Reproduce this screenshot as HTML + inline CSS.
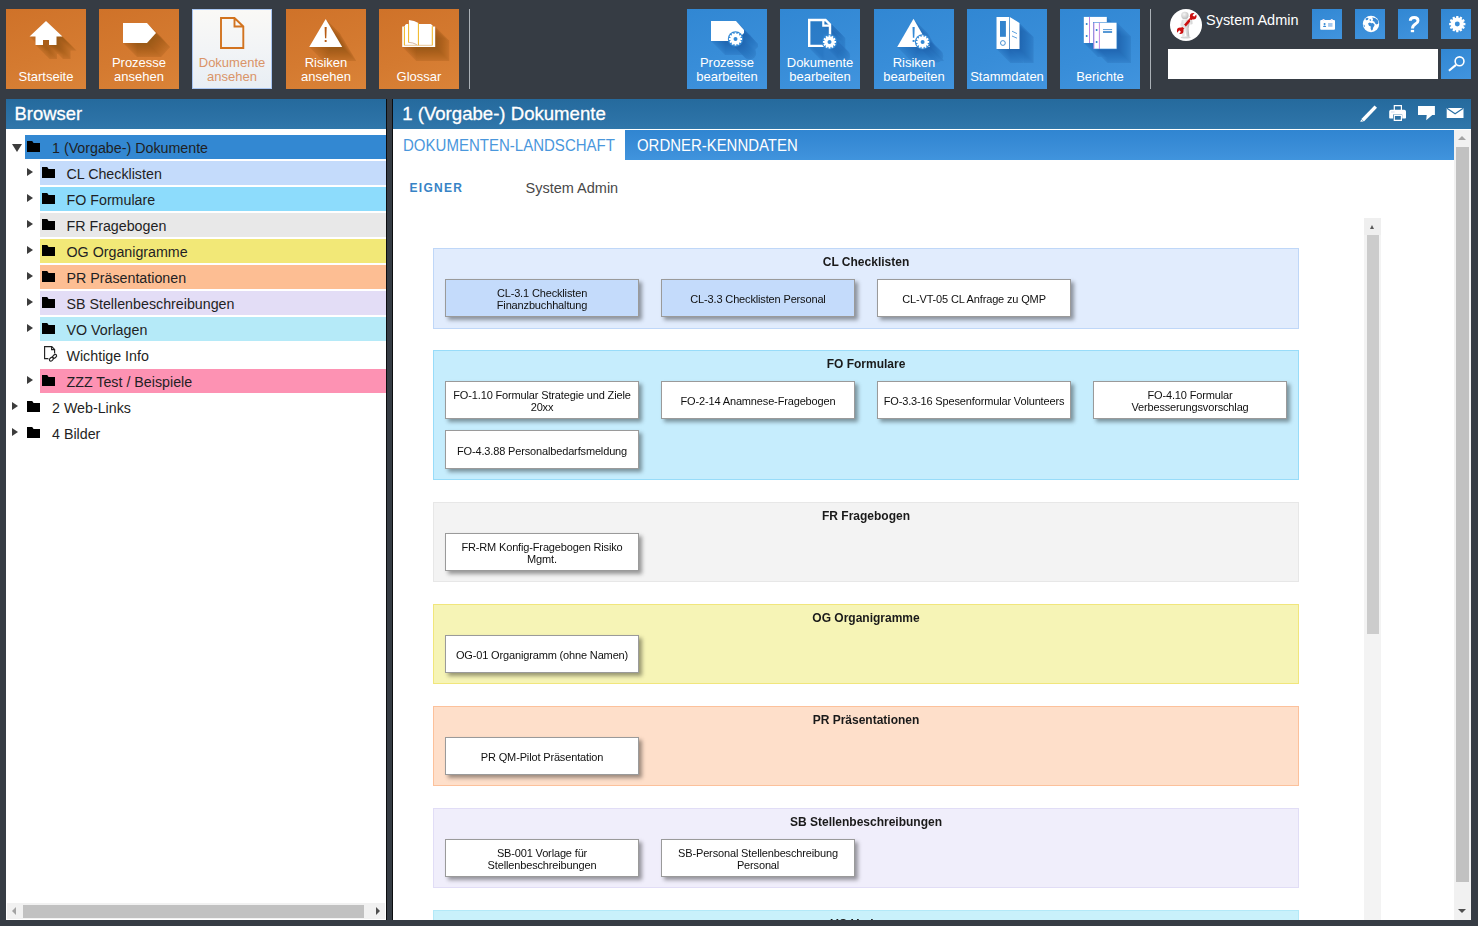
<!DOCTYPE html>
<html lang="de">
<head>
<meta charset="utf-8">
<title>1 (Vorgabe-) Dokumente</title>
<style>
*{box-sizing:border-box;margin:0;padding:0}
html,body{width:1478px;height:926px;overflow:hidden}
body{background:#363c44;font-family:"Liberation Sans",sans-serif;position:relative;color:#222}
.abs{position:absolute}
/* top buttons */
.tb{position:absolute;top:9px;width:80px;height:80px;overflow:hidden}
.tb svg{position:absolute;left:0;top:0;width:80px;height:80px}
.tb .lbl{position:absolute;left:-10px;right:-10px;bottom:5px;text-align:center;font-size:13px;line-height:14px;color:#fff;white-space:nowrap}
.or{background:linear-gradient(160deg,#cf7229 0%,#d47a30 55%,#da8338 100%)}
.bl{background:linear-gradient(160deg,#3187d3 0%,#388dd8 55%,#4194de 100%)}
.sel{background:linear-gradient(180deg,#faf9f6 0%,#f2f4f6 50%,#e8eef4 100%);border:1px solid #a9c6f2}
.sel .lbl{color:#da9468;bottom:4px}
.sep{position:absolute;top:9px;width:1px;height:80px;background:#aab0b6}
.sb{position:absolute;width:30px;height:30px;background:linear-gradient(160deg,#3187d3 0%,#4194de 100%)}
.sb svg{position:absolute;left:0;top:0;width:30px;height:30px}
/* panels */
.hdr{position:absolute;top:99px;height:30px;background:linear-gradient(180deg,#256a9d 0%,#2b71a5 60%,#3077aa 100%);color:#fff;font-size:18.4px;line-height:30px;white-space:nowrap}
.hdr span{position:absolute;top:0;-webkit-text-stroke:.3px #fff}
/* tree */
.row{position:absolute;height:24px;right:0}
.tx{position:absolute;top:1px;font-size:14.25px;line-height:24px;color:#1f1f24;white-space:nowrap}
.fo{position:absolute;width:13px;height:11px}
.ar{position:absolute;width:0;height:0;border-style:solid}
.ar.r{border-width:4px 0 4px 6px;border-color:transparent transparent transparent #3c3c3c}
.ar.d{border-width:8px 5px 0 5px;border-color:#3c3c3c transparent transparent transparent}
/* groups */
.grp{position:absolute;left:433px;width:866px;border:1px solid}
.grp .t{position:absolute;left:0;right:0;top:6px;text-align:center;font-weight:700;font-size:12px;line-height:14px;color:#1a1a1a}
.doc{position:absolute;width:194px;height:38px;border:1px solid #9a9a9a;background:#fff;box-shadow:3px 2.5px 4px rgba(0,0,0,.38);padding-top:2px;font-size:11px;line-height:12px;letter-spacing:-0.15px;color:#101010;text-align:center;display:flex;align-items:center;justify-content:center;white-space:nowrap}
.c1{left:11px}.c2{left:227px}.c3{left:443px}.c4{left:659px}
.r1{top:30px}.r2{top:79px;height:39px}
</style>
</head>
<body>

<!-- ===== TOP BAR ===== -->
<div id="topbar">

<svg width="0" height="0" style="position:absolute">
<defs>
<linearGradient id="shO" gradientUnits="userSpaceOnUse" x1="28" y1="20" x2="64" y2="56"><stop offset="0" stop-color="#8a4208" stop-opacity=".58"/><stop offset=".5" stop-color="#8a4208" stop-opacity=".3"/><stop offset="1" stop-color="#8a4208" stop-opacity=".05"/></linearGradient>
<linearGradient id="shB" gradientUnits="userSpaceOnUse" x1="28" y1="20" x2="66" y2="58"><stop offset="0" stop-color="#0f4f8f" stop-opacity=".54"/><stop offset=".5" stop-color="#0f4f8f" stop-opacity=".3"/><stop offset="1" stop-color="#0f4f8f" stop-opacity=".05"/></linearGradient>
<radialGradient id="hd" cx=".4" cy=".35" r=".75"><stop offset="0" stop-color="#f6f6f6"/><stop offset="1" stop-color="#b4b4b4"/></radialGradient>
<linearGradient id="bd" x1="0" x2="1" y1="0" y2="0"><stop offset="0" stop-color="#d8d8d8"/><stop offset=".45" stop-color="#f2f2f2"/><stop offset="1" stop-color="#b0b0b0"/></linearGradient>
<path id="gear" fill-rule="evenodd" d="M5.10,-1.01 L6.54,-0.88 L6.54,0.88 L5.10,1.01 L4.92,1.67 L6.10,2.51 L5.23,4.03 L3.91,3.43 L3.43,3.91 L4.03,5.23 L2.51,6.10 L1.67,4.92 L1.01,5.10 L0.88,6.54 L-0.88,6.54 L-1.01,5.10 L-1.67,4.92 L-2.51,6.10 L-4.03,5.23 L-3.43,3.91 L-3.91,3.43 L-5.23,4.03 L-6.10,2.51 L-4.92,1.67 L-5.10,1.01 L-6.54,0.88 L-6.54,-0.88 L-5.10,-1.01 L-4.92,-1.67 L-6.10,-2.51 L-5.23,-4.03 L-3.91,-3.43 L-3.43,-3.91 L-4.03,-5.23 L-2.51,-6.10 L-1.67,-4.92 L-1.01,-5.10 L-0.88,-6.54 L0.88,-6.54 L1.01,-5.10 L1.67,-4.92 L2.51,-6.10 L4.03,-5.23 L3.43,-3.91 L3.91,-3.43 L5.23,-4.03 L6.10,-2.51 L4.92,-1.67Z M-2.00,0.00 a2.00,2.00 0 1,0 4.00,0 a2.00,2.00 0 1,0 -4.00,0Z"/>
</defs>
</svg>

<!-- Startseite -->
<div class="tb or" style="left:6px">
<svg viewBox="0 0 80 80"><defs><path id="s_home" fill-rule="evenodd" d="M40,12 L56.50,27.50 L50.50,27.50 L50.50,36 L43,36 L43,31 L37,31 L37,36 L29.50,36 L29.50,27.50 L23.50,27.50Z"/></defs><path d="M23.50,27.50 L29.50,33.50 L29.50,36 L43.50,50 L51,50 L51,45 L52,45 L57,50 L64.50,50 L64.50,41.50 L70.50,41.50 L56.50,27.50 L40,12Z" fill="#6b3000" fill-opacity="0.12"/><g fill="#6b3000" fill-opacity="0.03"><use href="#s_home" x="1" y="1"/><use href="#s_home" x="2" y="2"/><use href="#s_home" x="3" y="3"/><use href="#s_home" x="4" y="4"/><use href="#s_home" x="5" y="5"/><use href="#s_home" x="6" y="6"/><use href="#s_home" x="7" y="7"/><use href="#s_home" x="8" y="8"/><use href="#s_home" x="9" y="9"/><use href="#s_home" x="10" y="10"/><use href="#s_home" x="11" y="11"/><use href="#s_home" x="12" y="12"/><use href="#s_home" x="13" y="13"/><use href="#s_home" x="14" y="14"/></g>
<path fill="#fff" d="M40,12 L56.5,27.5 L50.5,27.5 L50.5,36 L43,36 L43,31 L37,31 L37,36 L29.5,36 L29.5,27.5 L23.5,27.5 Z"/></svg>
<div class="lbl">Startseite</div></div>

<!-- Prozesse ansehen -->
<div class="tb or" style="left:99px">
<svg viewBox="0 0 80 80"><defs><path id="s_tag" fill-rule="evenodd" d="M24,14 L48,14 L57,24 L48,34 L24,34Z"/></defs><path d="M62,28 L48,14 L24,14 L24,34 L38,48 L62,48 L71,38Z" fill="#6b3000" fill-opacity="0.12"/><g fill="#6b3000" fill-opacity="0.03"><use href="#s_tag" x="1" y="1"/><use href="#s_tag" x="2" y="2"/><use href="#s_tag" x="3" y="3"/><use href="#s_tag" x="4" y="4"/><use href="#s_tag" x="5" y="5"/><use href="#s_tag" x="6" y="6"/><use href="#s_tag" x="7" y="7"/><use href="#s_tag" x="8" y="8"/><use href="#s_tag" x="9" y="9"/><use href="#s_tag" x="10" y="10"/><use href="#s_tag" x="11" y="11"/><use href="#s_tag" x="12" y="12"/><use href="#s_tag" x="13" y="13"/><use href="#s_tag" x="14" y="14"/></g>
<polygon fill="#fff" points="24,14 48,14 57,24 48,34 24,34"/></svg>
<div class="lbl">Prozesse<br>ansehen</div></div>

<!-- Dokumente ansehen (selected) -->
<div class="tb sel" style="left:192px">
<svg viewBox="0 0 80 80" style="left:-1px;top:-1px"><path fill="none" stroke="#d2731f" stroke-width="1.9" d="M29,9 L42.5,9 L51.3,17.5 L51.3,39 L29,39 Z M42.5,9 L42.5,17.5 L51.3,17.5"/></svg>
<div class="lbl" style="left:-11px;right:-11px">Dokumente<br>ansehen</div></div>

<!-- Risiken ansehen -->
<div class="tb or" style="left:286px">
<svg viewBox="0 0 80 80"><defs><path id="s_tri" fill-rule="evenodd" d="M39.70,10 L56.20,38 L23.20,38Z"/></defs><path d="M39.70,10 L23.20,38 L37.20,52 L70.20,52 L53.70,24Z" fill="#6b3000" fill-opacity="0.12"/><g fill="#6b3000" fill-opacity="0.03"><use href="#s_tri" x="1" y="1"/><use href="#s_tri" x="2" y="2"/><use href="#s_tri" x="3" y="3"/><use href="#s_tri" x="4" y="4"/><use href="#s_tri" x="5" y="5"/><use href="#s_tri" x="6" y="6"/><use href="#s_tri" x="7" y="7"/><use href="#s_tri" x="8" y="8"/><use href="#s_tri" x="9" y="9"/><use href="#s_tri" x="10" y="10"/><use href="#s_tri" x="11" y="11"/><use href="#s_tri" x="12" y="12"/><use href="#s_tri" x="13" y="13"/><use href="#s_tri" x="14" y="14"/></g>
<polygon fill="#fff" points="39.7,10 56.2,38 23.2,38"/>
<path d="M38.6,18 L40.7,18 L40.3,29.3 L39,29.3Z" fill="#b85c14"/><rect x="38.7" y="31" width="1.9" height="2" fill="#b85c14"/></svg>
<div class="lbl">Risiken<br>ansehen</div></div>

<!-- Glossar -->
<div class="tb or" style="left:379px">
<svg viewBox="0 0 80 80"><defs><path id="s_book" fill-rule="evenodd" d="M23.20,17.50 L25.90,17.50 L25.90,14.90 L29.90,14.90 L29.90,10.90 L35,11.60 L39.50,14 L39.80,14.90 L52.50,14.90 L54,17.50 L56.20,17.50 L56.20,38.10 L23.20,38.10Z"/></defs><path d="M35,11.60 L29.90,10.90 L29.90,14.90 L25.90,14.90 L25.90,17.50 L23.20,17.50 L23.20,38.10 L37.20,52.10 L70.20,52.10 L70.20,31.50 L56.20,17.50 L55.10,17.50 L52.50,14.90 L40.40,14.90 L39.50,14Z" fill="#6b3000" fill-opacity="0.12"/><g fill="#6b3000" fill-opacity="0.03"><use href="#s_book" x="1" y="1"/><use href="#s_book" x="2" y="2"/><use href="#s_book" x="3" y="3"/><use href="#s_book" x="4" y="4"/><use href="#s_book" x="5" y="5"/><use href="#s_book" x="6" y="6"/><use href="#s_book" x="7" y="7"/><use href="#s_book" x="8" y="8"/><use href="#s_book" x="9" y="9"/><use href="#s_book" x="10" y="10"/><use href="#s_book" x="11" y="11"/><use href="#s_book" x="12" y="12"/><use href="#s_book" x="13" y="13"/><use href="#s_book" x="14" y="14"/></g>
<path fill="#fff" d="M23.2,17.5 L25.9,17.5 L25.9,16.4 Q26.2,14.9 27.6,14.9 L29.9,14.9 L29.9,10.9 Q35.5,11.4 39.5,14 L39.8,14.9 L51.6,14.9 Q53.6,15.4 54,17.5 L56.2,17.5 L56.2,38.1 L23.2,38.1 Z"/>
<path fill="none" stroke="#efb010" stroke-width=".95" d="M25.4,17.9 L25.4,36.3 M53.3,17.2 L53.3,36.3 M29.6,15 L29.6,33.6 M39.4,14 L39.4,36.3"/>
<path fill="none" stroke="#d9a050" stroke-width=".6" d="M25.4,36.3 L53.3,36.3"/>
<path fill="none" stroke="#b98a66" stroke-width=".6" d="M29.8,33.4 Q33.5,33.4 37.8,35.6"/></svg>
<div class="lbl">Glossar</div></div>

<div class="sep" style="left:469px"></div>

<!-- Prozesse bearbeiten -->
<div class="tb bl" style="left:687px">
<svg viewBox="0 0 80 80"><defs><path id="s_tagg" fill-rule="evenodd" d="M57,24 L57,21 L49,12 L24,12 L24,32 L42.21,32 L42.68,33.11 L43.40,34.19 L44.31,35.10 L45.39,35.82 L46.58,36.32 L47.85,36.57 L49.15,36.57 L49.79,36.47 L50.42,36.32 L51.61,35.82 L52.69,35.10 L53.60,34.19 L54.32,33.11 L54.82,31.92 L55.07,30.65 L55.10,30 L55.07,29.35 L54.82,28.08 L54.24,26.76Z"/></defs><path d="M55.17,46 L58.31,49.10 L59.39,49.82 L60.58,50.32 L61.85,50.57 L63.15,50.57 L64.42,50.32 L65.61,49.82 L66.69,49.10 L67.60,48.19 L68.32,47.11 L68.82,45.92 L68.97,45.29 L69.10,44 L68.97,42.71 L68.60,41.47 L68.24,40.76 L71,38 L71,35 L63,26 L49,12 L24,12 L24,32 L38,46Z" fill="#0b3f78" fill-opacity="0.1"/><g fill="#0b3f78" fill-opacity="0.025"><use href="#s_tagg" x="1" y="1"/><use href="#s_tagg" x="2" y="2"/><use href="#s_tagg" x="3" y="3"/><use href="#s_tagg" x="4" y="4"/><use href="#s_tagg" x="5" y="5"/><use href="#s_tagg" x="6" y="6"/><use href="#s_tagg" x="7" y="7"/><use href="#s_tagg" x="8" y="8"/><use href="#s_tagg" x="9" y="9"/><use href="#s_tagg" x="10" y="10"/><use href="#s_tagg" x="11" y="11"/><use href="#s_tagg" x="12" y="12"/><use href="#s_tagg" x="13" y="13"/><use href="#s_tagg" x="14" y="14"/></g>
<polygon fill="#fff" points="24,12 49,12 57,21 57,24 49,32 24,32"/>
<circle cx="48.5" cy="30" r="7.7" fill="#3489d5"/><use href="#gear" x="48.5" y="30" fill="#fff"/></svg>
<div class="lbl">Prozesse<br>bearbeiten</div></div>

<!-- Dokumente bearbeiten -->
<div class="tb bl" style="left:780px">
<svg viewBox="0 0 80 80"><defs><path id="s_docg" fill-rule="evenodd" d="M45.45,38.10 L46.39,38.72 L46.97,39 L47.58,39.22 L48.85,39.47 L50.15,39.47 L50.79,39.37 L52.03,39 L53.17,38.39 L53.69,38 L54.60,37.09 L55.32,36.01 L55.82,34.82 L55.97,34.19 L56.10,32.90 L55.97,31.61 L55.60,30.37 L54.99,29.23 L54.17,28.23 L53.17,27.41 L52.03,26.80 L51.20,26.53 L51.20,15 L46,9.80 L28,9.80 L28,38.10Z M48.80,26.34 L47.58,26.58 L46.97,26.80 L45.83,27.41 L45.31,27.80 L44.40,28.71 L43.68,29.79 L43.18,30.98 L42.93,32.25 L42.90,32.90 L43.03,34.19 L43.53,35.70 L30.40,35.70 L30.40,12.20 L42.20,12.20 L42.20,17.80 L48.80,17.80Z M44.40,12.20 L45,12.20 L48.40,15.60 L44.40,15.60Z"/></defs><path d="M28,9.80 L28,38.10 L42,52.10 L59.45,52.10 L60.39,52.72 L61.58,53.22 L62.85,53.47 L63.50,53.50 L64.79,53.37 L66.03,53 L67.17,52.39 L68.17,51.57 L68.99,50.57 L69.32,50.01 L69.82,48.82 L70.07,47.55 L70.07,46.25 L69.82,44.98 L69.32,43.79 L68.99,43.23 L68.17,42.23 L65.20,39.27 L65.20,29 L46,9.80Z M47.58,26.58 L46.97,26.80 L45.83,27.41 L45.31,27.80 L44.40,28.71 L44.40,26.20 L48.80,26.20 L48.80,26.34Z" fill="#0b3f78" fill-opacity="0.1"/><g fill="#0b3f78" fill-opacity="0.025"><use href="#s_docg" x="1" y="1"/><use href="#s_docg" x="2" y="2"/><use href="#s_docg" x="3" y="3"/><use href="#s_docg" x="4" y="4"/><use href="#s_docg" x="5" y="5"/><use href="#s_docg" x="6" y="6"/><use href="#s_docg" x="7" y="7"/><use href="#s_docg" x="8" y="8"/><use href="#s_docg" x="9" y="9"/><use href="#s_docg" x="10" y="10"/><use href="#s_docg" x="11" y="11"/><use href="#s_docg" x="12" y="12"/><use href="#s_docg" x="13" y="13"/><use href="#s_docg" x="14" y="14"/></g>
<path fill="none" stroke="#fff" stroke-width="2.4" d="M29.2,11 L45.5,11 L50,15.5 L50,36.9 L29.2,36.9 Z"/><path fill="none" stroke="#fff" stroke-width="2.2" d="M43.3,11 L43.3,16.7 L50,16.7"/>
<circle cx="49.5" cy="32.9" r="7.7" fill="#3489d5"/><use href="#gear" x="49.5" y="32.9" fill="#fff"/></svg>
<div class="lbl">Dokumente<br>bearbeiten</div></div>

<!-- Risiken bearbeiten -->
<div class="tb bl" style="left:874px">
<svg viewBox="0 0 80 80"><defs><path id="s_trig" fill-rule="evenodd" d="M39.50,9.80 L23.20,38.10 L44.55,38.10 L45.49,38.72 L46.68,39.22 L47.95,39.47 L48.60,39.50 L49.89,39.37 L50.52,39.22 L51.71,38.72 L52.65,38.10 L55.80,38.10 L54.50,35.84 L54.92,34.82 L55.07,34.19 L55.20,32.90 L55.07,31.61 L54.92,30.98 L54.42,29.79 L53.70,28.71 L52.79,27.80 L52.27,27.41 L51.13,26.80 L50.52,26.58 L49.02,26.32Z"/></defs><path d="M37.20,52.10 L58.55,52.10 L59.49,52.72 L60.68,53.22 L61.95,53.47 L62.60,53.50 L63.89,53.37 L64.52,53.22 L65.71,52.72 L66.65,52.10 L69.80,52.10 L68.50,49.84 L68.92,48.82 L69.07,48.19 L69.17,47.55 L69.17,46.25 L68.92,44.98 L68.42,43.79 L68.09,43.23 L67.27,42.23 L59.84,34.80 L53.50,23.80 L39.50,9.80 L23.20,38.10Z" fill="#0b3f78" fill-opacity="0.1"/><g fill="#0b3f78" fill-opacity="0.025"><use href="#s_trig" x="1" y="1"/><use href="#s_trig" x="2" y="2"/><use href="#s_trig" x="3" y="3"/><use href="#s_trig" x="4" y="4"/><use href="#s_trig" x="5" y="5"/><use href="#s_trig" x="6" y="6"/><use href="#s_trig" x="7" y="7"/><use href="#s_trig" x="8" y="8"/><use href="#s_trig" x="9" y="9"/><use href="#s_trig" x="10" y="10"/><use href="#s_trig" x="11" y="11"/><use href="#s_trig" x="12" y="12"/><use href="#s_trig" x="13" y="13"/><use href="#s_trig" x="14" y="14"/></g>
<polygon fill="#fff" points="39.5,9.8 55.8,38.1 23.2,38.1"/>
<path d="M38.5,18.1 L40.7,18.1 L40.3,28.8 L38.9,28.8Z" fill="#3489d5"/><rect x="38.6" y="31" width="2" height="1.9" fill="#3489d5"/>
<circle cx="48.6" cy="32.9" r="7.7" fill="#3489d5"/><use href="#gear" x="48.6" y="32.9" fill="#fff"/></svg>
<div class="lbl">Risiken<br>bearbeiten</div></div>

<!-- Stammdaten -->
<div class="tb bl" style="left:967px">
<svg viewBox="0 0 80 80"><defs><path id="s_binder" fill-rule="evenodd" d="M29.50,40 L42.10,40 L42.10,7.90 L29.50,7.90Z M42.80,40 L52.50,40 L52.50,13.90 L42.80,7.90Z"/></defs><path d="M43.50,54 L56.10,54 L56.10,53.30 L56.80,54 L66.50,54 L66.50,27.90 L52.50,13.90 L42.80,7.90 L42.80,8.60 L42.10,7.90 L29.50,7.90 L29.50,40Z" fill="#0b3f78" fill-opacity="0.1"/><g fill="#0b3f78" fill-opacity="0.025"><use href="#s_binder" x="1" y="1"/><use href="#s_binder" x="2" y="2"/><use href="#s_binder" x="3" y="3"/><use href="#s_binder" x="4" y="4"/><use href="#s_binder" x="5" y="5"/><use href="#s_binder" x="6" y="6"/><use href="#s_binder" x="7" y="7"/><use href="#s_binder" x="8" y="8"/><use href="#s_binder" x="9" y="9"/><use href="#s_binder" x="10" y="10"/><use href="#s_binder" x="11" y="11"/><use href="#s_binder" x="12" y="12"/><use href="#s_binder" x="13" y="13"/><use href="#s_binder" x="14" y="14"/></g>
<path fill="#fff" d="M29.5,7.9 L42.1,7.9 L42.1,40 L29.5,40 Z M42.8,7.9 L52.5,13.9 L52.5,40 L42.8,40 Z"/>
<rect x="33" y="12" width="5.9" height="15.8" fill="#3383cd"/><circle cx="35.9" cy="34" r="2.4" fill="none" stroke="#3383cd" stroke-width=".9"/>
<path d="M45,22.2 L50,24.6 M45,27 L50,29.2" stroke="#3489d5" stroke-width=".8"/></svg>
<div class="lbl">Stammdaten</div></div>

<!-- Berichte -->
<div class="tb bl" style="left:1060px">
<svg viewBox="0 0 80 80"><defs><path id="s_ber" fill-rule="evenodd" d="M46.80,7.90 L23.80,7.90 L23.80,34 L33.40,34 L33.40,40 L56.90,40 L56.90,13.30 L46.80,13.30Z"/></defs><path d="M56.90,13.30 L52.20,13.30 L46.80,7.90 L23.80,7.90 L23.80,34 L37.80,48 L41.40,48 L47.40,54 L70.90,54 L70.90,27.30Z" fill="#0b3f78" fill-opacity="0.1"/><g fill="#0b3f78" fill-opacity="0.025"><use href="#s_ber" x="1" y="1"/><use href="#s_ber" x="2" y="2"/><use href="#s_ber" x="3" y="3"/><use href="#s_ber" x="4" y="4"/><use href="#s_ber" x="5" y="5"/><use href="#s_ber" x="6" y="6"/><use href="#s_ber" x="7" y="7"/><use href="#s_ber" x="8" y="8"/><use href="#s_ber" x="9" y="9"/><use href="#s_ber" x="10" y="10"/><use href="#s_ber" x="11" y="11"/><use href="#s_ber" x="12" y="12"/><use href="#s_ber" x="13" y="13"/><use href="#s_ber" x="14" y="14"/></g>
<rect x="23.8" y="7.9" width="23" height="26.1" fill="#fff"/><rect x="33.4" y="13.3" width="23.5" height="26.7" fill="#fff" stroke="#3489d5" stroke-width=".6"/>
<path d="M29.5,7.9 L29.5,34 M39.4,13.6 L39.4,40 M33.9,13.8 L33.9,40" stroke="#b268dc" stroke-width=".8"/>
<circle cx="26.7" cy="15" r="1" fill="#2d7fcb"/><circle cx="26.7" cy="26.9" r="1" fill="#2d7fcb"/><circle cx="36.6" cy="20.9" r="1" fill="#2d7fcb"/><circle cx="36.6" cy="33" r="1" fill="#2d7fcb"/>
<path d="M43,20.6 L52.1,20.6" stroke="#2d7fcb" stroke-width=".8"/><path d="M43,23 L52.1,23" stroke="#2d7fcb" stroke-width="1.6"/></svg>
<div class="lbl">Berichte</div></div>

<div class="sep" style="left:1150px"></div>

<!-- avatar -->
<div class="abs" style="left:1170px;top:9px;width:32px;height:32px;border-radius:50%;background:radial-gradient(circle at 50% 42%,#fff 0%,#fff 68%,#ececec 100%);overflow:hidden">
<svg viewBox="0 0 32 32" width="32" height="32" style="position:absolute;left:0;top:0">
<ellipse cx="15.6" cy="28.4" rx="5" ry="1" fill="#d4d4d4"/>
<circle cx="14.9" cy="6.5" r="3.7" fill="url(#hd)"/>
<path d="M11.8,11 Q15,9.7 18.4,10.8 L19.6,14.5 L18.6,19.5 L19.4,27.8 L16.5,27.8 L15.6,21.5 L14.8,27.8 L12.3,27.8 L12.6,19.5 L11,15.5Z" fill="url(#bd)"/>
<path d="M11.4,20.6 L22.2,8.4" stroke="#cc1010" stroke-width="2.6"/>
<circle cx="23.2" cy="7.2" r="3.3" fill="#cc1010"/><rect x="23.4" y="6.1" width="4.2" height="2.2" fill="#fff" transform="rotate(-48 23.2 7.2)"/>
<circle cx="10.2" cy="21.8" r="3.3" fill="#cc1010"/><rect x="10.4" y="20.7" width="4.2" height="2.2" fill="#fff" transform="rotate(128 10.2 21.8)"/>
<path d="M10.3,14.4 L14.6,16 L16,18 L14.3,19.4 L10.6,16.8Z" fill="#e4e4e4"/>
<path d="M19.8,10.6 L22.4,11.4 L22.6,15 L20.5,15.8 Z" fill="#d8d8d8"/>
</svg></div>
<div class="abs" style="left:1206px;top:10px;font-size:15.4px;line-height:20px;color:#fff;white-space:nowrap;transform:scaleX(.94);transform-origin:0 0">System Admin</div>

<!-- small buttons -->
<div class="sb" style="left:1312px;top:9px"><svg viewBox="0 0 30 30"><path fill="#fff" d="M8.2,12 Q8.2,11 9.2,11 L10.6,11 L10.6,10 L12.4,10 L12.4,11 L18.8,11 L18.8,10 L20.6,10 L20.6,11 L22,11 Q23,11 23,12 L23,19.7 Q23,20.7 22,20.7 L9.2,20.7 Q8.2,20.7 8.2,19.7 Z"/>
<rect x="16.1" y="14" width="4.4" height="3.8" fill="#a6c9ee"/><circle cx="12.6" cy="15" r="1.05" fill="#3489d5"/><path d="M11,18 Q11,16.4 12.6,16.4 Q14.2,16.4 14.2,18Z" fill="#3489d5"/><circle cx="11.5" cy="10.9" r=".45" fill="#b070e0"/><circle cx="19.7" cy="10.9" r=".45" fill="#b070e0"/></svg></div>
<div class="sb" style="left:1355px;top:9px"><svg viewBox="0 0 30 30"><circle cx="16" cy="15" r="8.2" fill="#fff"/>
<path fill="#3a8ad5" d="M17.2,8.4 Q20.8,8.2 23,11.4 Q23.6,13.2 23.2,14.8 L21.6,15.6 L20.2,14.4 L19.2,12.6 L17.6,12 L18,10.2Z M13,14.4 L14.8,13.6 L16.4,14.2 L17.8,14 L19.4,15.2 L19.4,16.8 L18.2,18.6 L17.6,21 L16.4,21.4 L15.6,19.4 L15.8,17.6 L14,16.8Z M10.4,9.6 L12.4,8.8 L13.6,9.6 L12.6,11 L11,11.2Z M8.6,15.4 L9.6,16.2 L9.8,18.2 L8.9,17.4Z M14.4,10.6 L15.8,10.2 L16.2,11.4 L15,12Z"/></svg></div>
<div class="sb" style="left:1398px;top:9px"><svg viewBox="0 0 30 30"><path fill="none" stroke="#fff" stroke-width="2.9" d="M12.3,11.8 Q12.3,8.5 16.2,8.5 Q20,8.5 20,11.7 Q20,13.5 17.4,15.1 Q14.5,16.8 14.5,19.4"/><rect x="12.8" y="20.9" width="3.3" height="2.3" fill="#fff"/></svg></div>
<div class="sb" style="left:1441px;top:9px"><svg viewBox="0 0 30 30"><g transform="translate(16.3,15.05) scale(1.24)"><use href="#gear" fill="#fff"/></g></svg></div>

<!-- search -->
<div class="abs" style="left:1168px;top:49px;width:270px;height:30px;background:#fff"></div>
<div class="sb" style="left:1441px;top:49px"><svg viewBox="0 0 30 30"><circle cx="18.55" cy="12.3" r="4.4" fill="none" stroke="#fff" stroke-width="1.6"/><path d="M15,15.9 L7.9,21.8" stroke="#fff" stroke-width="2.1" stroke-linecap="butt"/></svg></div>
</div>

<!-- ===== LEFT PANEL ===== -->
<div id="left">
<div class="hdr" style="left:6px;width:380px"><span style="left:8.6px">Browser</span></div>
<div class="abs" style="left:6px;top:129px;width:380px;height:791px;background:#fff;overflow:hidden">
<div class="row" style="top:6px;left:0"><div class="abs" style="left:19px;right:0;top:0;height:24px;background:#3388d2"></div><div class="ar d" style="left:6px;top:9px"></div><svg class="fo" style="left:21px;top:6px" viewBox="0 0 13 11"><path d="M0,0 L5.2,0 L6.6,2 L13,2 L13,11 L0,11Z" fill="#000"/></svg><div class="tx" style="left:46.0px">1 (Vorgabe-) Dokumente</div></div>
<div class="row" style="top:32px;left:0"><div class="abs" style="left:34px;right:0;top:0;height:24px;background:#c4dbfb"></div><div class="ar r" style="left:21px;top:7px"></div><svg class="fo" style="left:36px;top:6px" viewBox="0 0 13 11"><path d="M0,0 L5.2,0 L6.6,2 L13,2 L13,11 L0,11Z" fill="#000"/></svg><div class="tx" style="left:60.5px">CL Checklisten</div></div>
<div class="row" style="top:58px;left:0"><div class="abs" style="left:34px;right:0;top:0;height:24px;background:#8ddcfc"></div><div class="ar r" style="left:21px;top:7px"></div><svg class="fo" style="left:36px;top:6px" viewBox="0 0 13 11"><path d="M0,0 L5.2,0 L6.6,2 L13,2 L13,11 L0,11Z" fill="#000"/></svg><div class="tx" style="left:60.5px">FO Formulare</div></div>
<div class="row" style="top:84px;left:0"><div class="abs" style="left:34px;right:0;top:0;height:24px;background:#e8e8e8"></div><div class="ar r" style="left:21px;top:7px"></div><svg class="fo" style="left:36px;top:6px" viewBox="0 0 13 11"><path d="M0,0 L5.2,0 L6.6,2 L13,2 L13,11 L0,11Z" fill="#000"/></svg><div class="tx" style="left:60.5px">FR Fragebogen</div></div>
<div class="row" style="top:110px;left:0"><div class="abs" style="left:34px;right:0;top:0;height:24px;background:#f2e877"></div><div class="ar r" style="left:21px;top:7px"></div><svg class="fo" style="left:36px;top:6px" viewBox="0 0 13 11"><path d="M0,0 L5.2,0 L6.6,2 L13,2 L13,11 L0,11Z" fill="#000"/></svg><div class="tx" style="left:60.5px">OG Organigramme</div></div>
<div class="row" style="top:136px;left:0"><div class="abs" style="left:34px;right:0;top:0;height:24px;background:#fdbe93"></div><div class="ar r" style="left:21px;top:7px"></div><svg class="fo" style="left:36px;top:6px" viewBox="0 0 13 11"><path d="M0,0 L5.2,0 L6.6,2 L13,2 L13,11 L0,11Z" fill="#000"/></svg><div class="tx" style="left:60.5px">PR Präsentationen</div></div>
<div class="row" style="top:162px;left:0"><div class="abs" style="left:34px;right:0;top:0;height:24px;background:#e3ddf6"></div><div class="ar r" style="left:21px;top:7px"></div><svg class="fo" style="left:36px;top:6px" viewBox="0 0 13 11"><path d="M0,0 L5.2,0 L6.6,2 L13,2 L13,11 L0,11Z" fill="#000"/></svg><div class="tx" style="left:60.5px">SB Stellenbeschreibungen</div></div>
<div class="row" style="top:188px;left:0"><div class="abs" style="left:34px;right:0;top:0;height:24px;background:#b5eaf8"></div><div class="ar r" style="left:21px;top:7px"></div><svg class="fo" style="left:36px;top:6px" viewBox="0 0 13 11"><path d="M0,0 L5.2,0 L6.6,2 L13,2 L13,11 L0,11Z" fill="#000"/></svg><div class="tx" style="left:60.5px">VO Vorlagen</div></div>
<div class="row" style="top:214px;left:0"><svg class="abs" style="left:38px;top:3px;width:15px;height:17px" viewBox="0 0 15 17"><path d="M10.6,7.6 L10.6,3.4 L7.8,0.6 L0.6,0.6 L0.6,12.6 L4.4,12.6 M7.6,0.6 L7.6,3.6 L10.6,3.6" fill="none" stroke="#222" stroke-width="1.15"/><g fill="none" stroke="#222" stroke-width="1.15"><ellipse cx="10.6" cy="10.4" rx="2.3" ry="1.5" transform="rotate(-40 10.6 10.4)"/><ellipse cx="7.4" cy="13.2" rx="2.3" ry="1.5" transform="rotate(-40 7.4 13.2)"/></g></svg><div class="tx" style="left:60.5px">Wichtige Info</div></div>
<div class="row" style="top:240px;left:0"><div class="abs" style="left:34px;right:0;top:0;height:24px;background:#fd92b3"></div><div class="ar r" style="left:21px;top:7px"></div><svg class="fo" style="left:36px;top:6px" viewBox="0 0 13 11"><path d="M0,0 L5.2,0 L6.6,2 L13,2 L13,11 L0,11Z" fill="#000"/></svg><div class="tx" style="left:60.5px">ZZZ Test / Beispiele</div></div>
<div class="row" style="top:266px;left:0"><div class="ar r" style="left:6px;top:7px"></div><svg class="fo" style="left:21px;top:6px" viewBox="0 0 13 11"><path d="M0,0 L5.2,0 L6.6,2 L13,2 L13,11 L0,11Z" fill="#000"/></svg><div class="tx" style="left:46.0px">2 Web-Links</div></div>
<div class="row" style="top:292px;left:0"><div class="ar r" style="left:6px;top:7px"></div><svg class="fo" style="left:21px;top:6px" viewBox="0 0 13 11"><path d="M0,0 L5.2,0 L6.6,2 L13,2 L13,11 L0,11Z" fill="#000"/></svg><div class="tx" style="left:46.0px">4 Bilder</div></div>
<div class="abs" style="left:1px;top:774px;width:378px;height:16px;background:#f1f1f1"><div class="abs" style="left:16px;top:2px;width:341px;height:13px;background:#c1c1c1"></div><div class="abs" style="left:5px;top:4px;width:0;height:0;border-style:solid;border-width:4px 4px 4px 0;border-color:transparent #a3a3a3 transparent transparent"></div><div class="abs" style="left:369px;top:4px;width:0;height:0;border-style:solid;border-width:4px 0 4px 4px;border-color:transparent transparent transparent #505050"></div></div>
</div>
<div class="abs" style="left:386px;top:99px;width:1px;height:821px;background:#0c0d0f"></div>
<div class="abs" style="left:392px;top:99px;width:1px;height:821px;background:#0c0d0f"></div>
</div>

<!-- ===== RIGHT PANEL ===== -->
<div id="right">
<div class="hdr" style="left:393px;width:1078px"><span style="left:9.2px;font-size:18.6px">1 (Vorgabe-) Dokumente</span>
<svg class="abs" style="left:965px;top:4px;width:22px;height:22px" viewBox="0 0 22 22"><path d="M3.4,16 L16.5,2.4 L19,4.8 L5.9,18.4 Z" fill="#fff"/><path d="M2.2,18.8 L3.3,16.6 L5.4,18.6Z" fill="#fff"/></svg>
<svg class="abs" style="left:994px;top:4px;width:22px;height:22px" viewBox="0 0 22 22"><path d="M7.3,7 L7.3,2.6 L14.4,2.6 L14.4,7" fill="none" stroke="#fff" stroke-width="1.2"/><path d="M2.2,8.6 Q2.2,6.8 4,6.8 L17.2,6.8 Q19,6.8 19,8.6 L19,14.8 Q19,15.6 18.2,15.6 L15.2,15.6 L15.2,11.6 L6,11.6 L6,15.6 L3,15.6 Q2.2,15.6 2.2,14.8Z" fill="#fff"/><path d="M7.3,12.4 L14.4,12.4 L14.4,17.4 L7.3,17.4Z" fill="#2a70a4" stroke="#fff" stroke-width="1.2"/><rect x="4" y="8.6" width="3.6" height=".8" fill="#c9d8ee"/></svg>
<svg class="abs" style="left:1023px;top:4px;width:22px;height:22px" viewBox="0 0 22 22"><path d="M2,3 L18.9,3 L18.9,12 L16.3,12 L10.2,17.3 L10.7,12 L2,12Z" fill="#fff"/></svg>
<svg class="abs" style="left:1052px;top:4px;width:22px;height:22px" viewBox="0 0 22 22"><rect x="1.7" y="5" width="16.8" height="10" fill="#fff"/><path d="M1.9,5.2 L10.1,10.8 L18.3,5.2" fill="none" stroke="#2a70a4" stroke-width="1.1"/></svg>
</div>
<div class="abs" style="left:393px;top:129px;width:1078px;height:791px;background:#fff;overflow:hidden">
<div class="abs" style="left:232px;top:1px;width:829px;height:30px;background:linear-gradient(180deg,#3085d1 0%,#3a8dd7 60%,#4094dd 100%)"></div>
<div class="abs" style="left:9.6px;top:2px;font-size:16.7px;line-height:30px;color:#4a97dc;white-space:nowrap;transform:scaleX(.9);transform-origin:0 0">DOKUMENTEN-LANDSCHAFT</div>
<div class="abs" style="left:244px;top:2px;font-size:16.7px;line-height:30px;color:#fff;white-space:nowrap;transform:scaleX(.895);transform-origin:0 0">ORDNER-KENNDATEN</div>
<div class="abs" style="left:16.5px;top:51px;font-size:12px;font-weight:700;letter-spacing:1.3px;line-height:16px;color:#3783c6;white-space:nowrap">EIGNER</div>
<div class="abs" style="left:132.5px;top:50px;font-size:14.5px;line-height:18px;color:#484848;white-space:nowrap">System Admin</div>
<div class="abs" style="left:1061px;top:1px;width:17px;height:790px;background:#f1f1f1"><div class="abs" style="left:2px;top:17px;width:13px;height:735px;background:#c1c1c1"></div><div class="abs" style="left:4px;top:6px;width:0;height:0;border-style:solid;border-width:0 4.5px 4px 4.5px;border-color:transparent transparent #a3a3a3 transparent"></div><div class="abs" style="left:4px;top:779px;width:0;height:0;border-style:solid;border-width:4px 4.5px 0 4.5px;border-color:#505050 transparent transparent transparent"></div></div>
<div class="abs" style="left:971px;top:89px;width:17px;height:702px;background:#f3f3f3"><div class="abs" style="left:0;top:0;width:17px;height:17px;background:#efefef"></div><div class="abs" style="left:3px;top:17px;width:12px;height:399px;background:#cccccc"></div><div class="abs" style="left:6px;top:6.5px;width:0;height:0;border-style:solid;border-width:0 2.5px 4px 2.5px;border-color:transparent transparent #5a5a5a transparent"></div></div>
</div>
<div class="abs" style="left:0;top:0;width:1478px;height:920px;overflow:hidden;will-change:transform">
<div class="grp" style="top:248px;height:81px;background:#e1ecfd;border-color:#bfd7f8"><div class="t">CL Checklisten</div><div class="doc c1 r1" style="background:#c4dbfb"><span>CL-3.1 Checklisten<br>Finanzbuchhaltung</span></div><div class="doc c2 r1" style="background:#c4dbfb"><span>CL-3.3 Checklisten Personal</span></div><div class="doc c3 r1"><span>CL-VT-05 CL Anfrage zu QMP</span></div></div>
<div class="grp" style="top:350px;height:130px;background:#c6edfd;border-color:#98dcf9"><div class="t">FO Formulare</div><div class="doc c1 r1"><span>FO-1.10 Formular Strategie und Ziele<br>20xx</span></div><div class="doc c2 r1"><span>FO-2-14 Anamnese-Fragebogen</span></div><div class="doc c3 r1"><span>FO-3.3-16 Spesenformular Volunteers</span></div><div class="doc c4 r1"><span>FO-4.10 Formular<br>Verbesserungsvorschlag</span></div><div class="doc c1 r2"><span>FO-4.3.88 Personalbedarfsmeldung</span></div></div>
<div class="grp" style="top:502px;height:80px;background:#f3f3f3;border-color:#e7e7e7"><div class="t">FR Fragebogen</div><div class="doc c1 r1"><span>FR-RM Konfig-Fragebogen Risiko<br>Mgmt.</span></div></div>
<div class="grp" style="top:604px;height:80px;background:#f6f4b6;border-color:#f1e67c"><div class="t">OG Organigramme</div><div class="doc c1 r1"><span>OG-01 Organigramm (ohne Namen)</span></div></div>
<div class="grp" style="top:706px;height:80px;background:#fedfca;border-color:#fcc19b"><div class="t">PR Präsentationen</div><div class="doc c1 r1"><span>PR QM-Pilot Präsentation</span></div></div>
<div class="grp" style="top:808px;height:80px;background:#f0eefb;border-color:#e1ddf6"><div class="t">SB Stellenbeschreibungen</div><div class="doc c1 r1"><span>SB-001 Vorlage für<br>Stellenbeschreibungen</span></div><div class="doc c2 r1"><span>SB-Personal Stellenbeschreibung<br>Personal</span></div></div>
<div class="grp" style="top:910px;height:80px;background:#c9f1fb;border-color:#b3e9f8"><div class="t">VO Vorlagen</div></div>
</div>
</div>

</body>
</html>
